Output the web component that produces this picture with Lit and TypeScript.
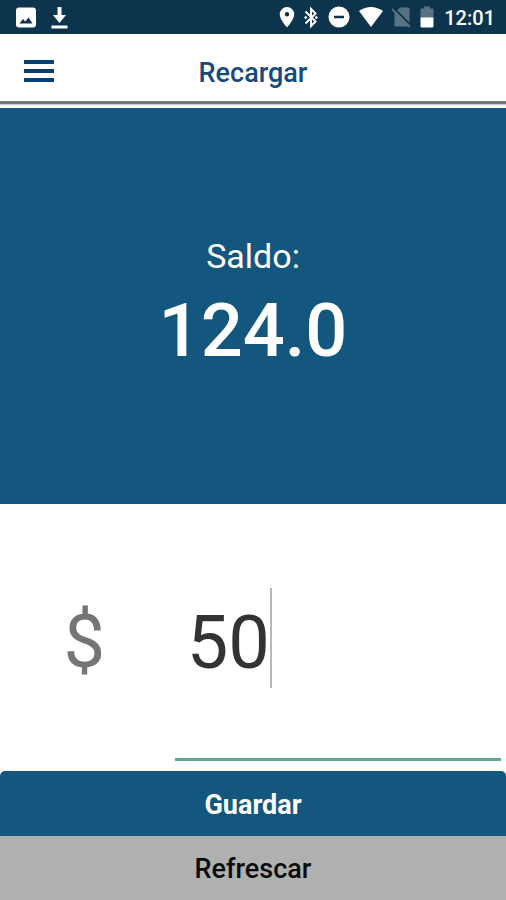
import { LitElement, html, css } from "lit";
import { customElement, state } from "lit/decorators.js";

@customElement("status-bar")
class StatusBar extends LitElement {
  static styles = css`
    :host {
      display: flex;
      align-items: center;
      justify-content: space-between;
      height: 34px;
      box-sizing: border-box;
      padding: 0 11px 0 15px;
      background: #0c344d;
      color: #fff;
      font-size: 20px;
      font-weight: 500;
      line-height: 24px;
    }
    .group {
      display: flex;
      align-items: center;
    }
    .left {
      gap: 14px;
    }
    .right {
      gap: 9px;
    }
    svg {
      display: block;
      fill: currentColor;
    }
    time {
      padding-top: 2px;
    }
    .dim {
      fill: #587283;
    }
    .dim-line {
      stroke: #587283;
      stroke-width: 2;
    }
    .gap-line {
      stroke: #0c344d;
      stroke-width: 2;
    }
    .rune {
      fill: none;
      stroke: currentColor;
      stroke-width: 2;
    }
  `;

  render() {
    return html`
      <div class="group left">
        <svg width="22" height="24" viewBox="0 0 22 24" aria-hidden="true">
          <path
            fill-rule="evenodd"
            d="M4 2.500h14a3 3 0 0 1 3 3v14a3 3 0 0 1-3 3H4a3 3 0 0 1-3-3v-14a3 3 0 0 1 3-3zM4.500 18.500h13l-4-6-3.200 4-2.300-2.500z"
          />
        </svg>
        <svg width="17" height="24" viewBox="0 0 17 24" aria-hidden="true">
          <path d="M6.500 2h4v8h4.500L8.500 18 2 10h4.500zM.500 20.500h16v3H.500z" />
        </svg>
      </div>
      <div class="group right">
        <svg width="16" height="24" viewBox="0 0 16 24" aria-hidden="true">
          <path
            fill-rule="evenodd"
            d="M8 2a7.300 7.300 0 0 0-7.300 7.300C.700 14.500 8 22.500 8 22.500s7.300-8 7.300-13.200A7.300 7.300 0 0 0 8 2zm0 5a2.200 2.200 0 1 1 0 4.400 2.200 2.200 0 0 1 0-4.400z"
          />
        </svg>
        <svg width="15" height="24" viewBox="0 0 15 24" aria-hidden="true">
          <path class="rune" d="M1.500 6.500 11.500 16.500 7 21V4L11.500 8.500 1.500 18.500" />
          <path d="M1.800 10.700 3.300 12.500 1.800 14.300 0 12.500zM12.200 10.700 14 12.500 12.200 14.300 10.700 12.500z" />
        </svg>
        <svg width="22" height="24" viewBox="0 0 22 24" aria-hidden="true">
          <path
            fill-rule="evenodd"
            d="M11 1.500a10.500 10.500 0 1 0 0 21 10.500 10.500 0 0 0 0-21zM6 10.700h10v2.600H6z"
          />
        </svg>
        <svg width="24" height="24" viewBox="0 0 24 24" aria-hidden="true">
          <path d="M0 6Q12-2 24 6L12 22z" />
        </svg>
        <svg width="18" height="24" viewBox="0 0 18 24" aria-hidden="true">
          <path class="dim" d="M8 2.500h8a1.500 1.500 0 0 1 1.500 1.500v17.500H2.500V8z" />
          <path class="gap-line" d="M1 2.500l18 18" />
          <path class="dim-line" d="M0 4l18 18" />
        </svg>
        <svg width="16" height="24" viewBox="0 0 16 24" aria-hidden="true">
          <path class="dim" d="M5 1.500h6v2h3.500V13h-13V3.500H5z" />
          <path d="M1.500 12.500h13V21a1.500 1.500 0 0 1-1.500 1.500H3A1.500 1.500 0 0 1 1.500 21z" />
        </svg>
        <time>12:01</time>
      </div>
    `;
  }
}

@customElement("app-root")
class AppRoot extends LitElement {
  @state() private amount = "50";

  static styles = css`
    :host {
      display: flex;
      flex-direction: column;
      min-height: 100vh;
      background: #fff;
      font-family: Roboto, "Noto Sans", sans-serif;
    }
    .app-bar {
      display: grid;
      grid-template-columns: 78px 1fr 78px;
      align-items: center;
      height: 70px;
      box-sizing: border-box;
      padding-top: 6px;
      border-bottom: 3px solid #727b79;
      box-shadow: 0 1px 1px #c3c9c8;
      margin-bottom: 4px;
    }
    .menu {
      display: flex;
      justify-content: center;
      padding: 8px 0;
      border: 0;
      background: none;
      color: #073f75;
    }
    .menu svg {
      fill: currentColor;
    }
    h1 {
      margin: 0;
      padding-top: 4px;
      text-align: center;
      color: #154a80;
      font-size: 27px;
      font-weight: 500;
      line-height: 32px;
    }
    .balance {
      flex: 1;
      display: flex;
      flex-direction: column;
      align-items: center;
      justify-content: center;
      padding-top: 10px;
      background: #13577f;
      color: #fff;
    }
    .balance-label {
      font-size: 34px;
      line-height: 40px;
    }
    .balance-value {
      font-size: 74px;
      font-weight: 500;
      line-height: 110px;
    }
    .amount {
      display: grid;
      grid-template-columns: 1fr 2fr;
      padding-top: 84px;
      margin-bottom: 10px;
      font-size: 74px;
    }
    .currency,
    .amount-input {
      height: 100px;
      box-sizing: border-box;
      padding-top: 8px;
    }
    .currency {
      text-align: center;
      line-height: 92px;
      color: #757575;
    }
    .field {
      display: flex;
      margin: 0 5px 0 6px;
      padding: 0 12px 70px;
      border-bottom: 3px solid #62a68c;
    }
    .amount-input {
      min-width: 0;
      border: 0;
      outline: 0;
      padding-left: 0;
      padding-right: 0;
      padding-bottom: 0;
      background: none;
      color: #333;
      font: inherit;
    }
    .caret {
      width: 2px;
      height: 100px;
      background: #b8b8b8;
    }
    .action {
      height: 64px;
      border: 0;
      padding: 2px 0 0;
      font-family: inherit;
      font-size: 27px;
      font-weight: 500;
      line-height: 32px;
    }
    .save {
      height: 65px;
      border-radius: 5px 5px 0 0;
      background: #13577f;
      color: #fff;
      font-weight: 700;
    }
    .refresh {
      background: #b0b0b0;
      color: #0a0a0a;
    }
  `;

  private onInput(e: Event) {
    this.amount = (e.target as HTMLInputElement).value;
  }

  render() {
    return html`
      <status-bar></status-bar>
      <header class="app-bar">
        <button class="menu" aria-label="Menú">
          <svg width="30" height="24" viewBox="0 0 30 24" aria-hidden="true">
            <path d="M0 1h30v4H0zM0 10h30v4H0zM0 19h30v4H0z" />
          </svg>
        </button>
        <h1>Recargar</h1>
      </header>
      <section class="balance">
        <div class="balance-label">Saldo:</div>
        <div class="balance-value">124.0</div>
      </section>
      <div class="amount">
        <label class="currency" for="amount">$</label>
        <div class="field">
          <input
            id="amount"
            class="amount-input"
            inputmode="decimal"
            .value=${this.amount}
            style="width: ${Math.max(1, this.amount.length)}ch"
            @input=${this.onInput}
          />
          <span class="caret"></span>
        </div>
      </div>
      <button class="action save">Guardar</button>
      <button class="action refresh">Refrescar</button>
    `;
  }
}
